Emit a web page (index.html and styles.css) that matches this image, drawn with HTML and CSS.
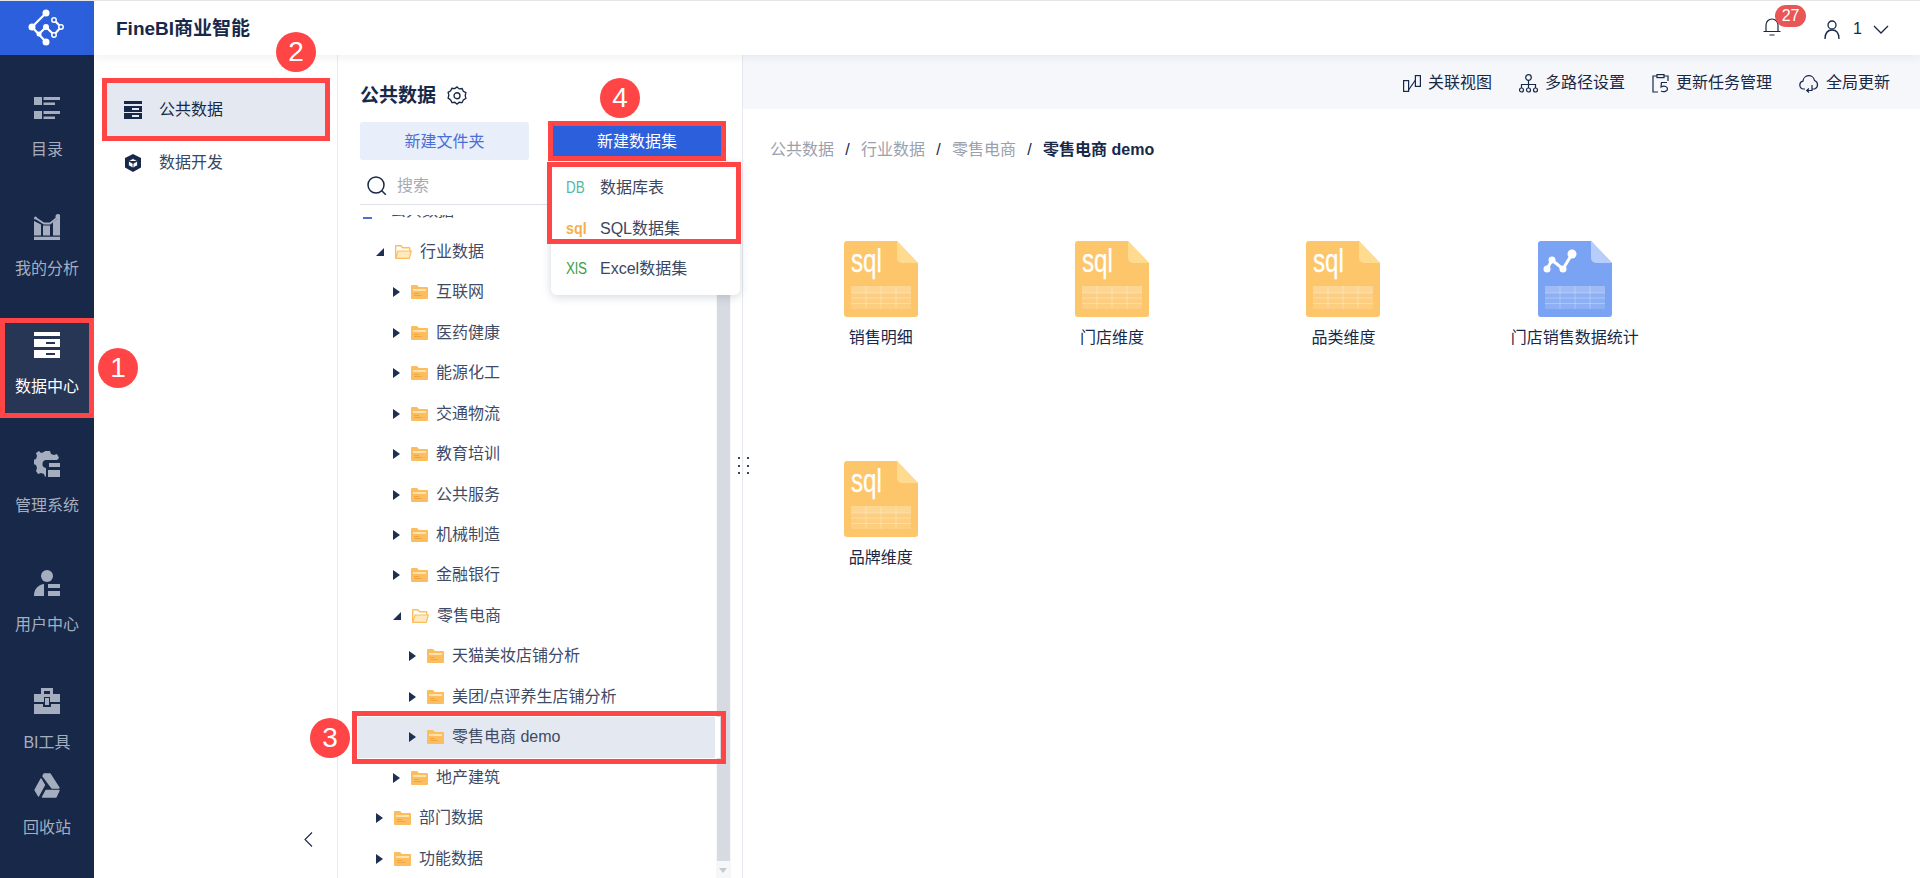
FILE: index.html
```html
<!DOCTYPE html>
<html lang="zh-CN">
<head>
<meta charset="utf-8">
<title>FineBI商业智能</title>
<link rel="stylesheet" href="styles.css">
</head>
<body>
<svg class="defs" width="0" height="0" aria-hidden="true">
  <defs>
    <symbol id="folder" viewBox="0 0 17 14">
      <path d="M1 0h5l2 2h8a1 1 0 0 1 1 1v10a1 1 0 0 1-1 1H1a1 1 0 0 1-1-1V1a1 1 0 0 1 1-1z" fill="#fbbd5e"/>
      <rect x="2" y="4" width="13" height="2" fill="#ffe3ad"/>
      <rect x="3" y="8" width="5" height="1" fill="#f0a63f"/>
      <rect x="3" y="10" width="8" height="1" fill="#f0a63f"/>
    </symbol>
    <symbol id="folder-open" viewBox="0 0 17 14">
      <path d="M.7 13V1.2q0-.5.5-.5h4.500l2 2h6.600q.5 0 .5.5V6" fill="none" stroke="#fbbd5e" stroke-width="1.400"/>
      <path d="M.7 13.300h13.600l2-7.300H3z" fill="#ffe9bf" stroke="#fbbd5e" stroke-width="1.200"/>
    </symbol>
    <symbol id="table-grid" viewBox="0 0 60 23">
      <rect width="60" height="23" fill="#fff" opacity=".14"/>
      <rect width="60" height="7" fill="#fff" opacity=".16"/>
      <path d="M15 0v23M30 0v23M45 0v23M0 7h60M0 12h60M0 17.500h60" stroke="#fff" stroke-opacity=".28" fill="none"/>
    </symbol>
  </defs>
</svg>

<div class="app">
  <aside class="rail">
    <div class="logo">
      <svg width="94" height="54" viewBox="0 1 94 54" fill="none">
        <path d="M46 13 32 27l14 15M39 34l7-7 8 8 7-8-7-7" stroke="#fff" stroke-width="2.200"/>
        <circle cx="46" cy="13" r="3.500" fill="#fff"/>
        <circle cx="32" cy="27" r="3.500" fill="#fff"/>
        <circle cx="46" cy="42" r="3.500" fill="#fff"/>
        <circle cx="46" cy="27" r="3" fill="#fff"/>
        <circle cx="39" cy="34" r="2.500" fill="#fff"/>
        <circle cx="54" cy="20" r="2.200" fill="#2c5fdb" stroke="#fff" stroke-width="1.500"/>
        <circle cx="61" cy="27" r="2.200" fill="#2c5fdb" stroke="#fff" stroke-width="1.500"/>
        <circle cx="54" cy="35" r="2.200" fill="#2c5fdb" stroke="#fff" stroke-width="1.500"/>
      </svg>
    </div>
    <nav class="rail-nav">
      <a class="rail-item">
        <svg class="rail-icon" viewBox="0 0 26 26"><path d="M0 2h8v8H0zM0 16h8v8H0zM9.500 2H26v3H9.500zM9.500 7.500H21v2.500H9.500zM9.500 16H26v3H9.500zM9.500 21.500H21V24H9.500z"/></svg>
        <span>目录</span>
      </a>
      <a class="rail-item">
        <svg class="rail-icon" viewBox="0 0 26 26"><path d="M0 22.700h26V26H0zM0 7l7 3.500v11H0zM9 11.500h7v10H9zM19 8l7-5v18.500h-7z"/><path d="M1.500 4l8.500 5.500h6L24 3" stroke="currentColor" fill="none" stroke-width="1.800"/><circle cx="24" cy="2.500" r="2.500"/><circle cx="1.500" cy="4" r="1.500"/></svg>
        <span>我的分析</span>
      </a>
      <a class="rail-item is-active">
        <svg class="rail-icon" viewBox="0 0 26 26"><path fill-rule="evenodd" d="M0 0h26v4H0zM0 7h26v8H0zM12 10v2h9v-2zM0 18h26v8H0zM12 21v2h9v-2z"/></svg>
        <span>数据中心</span>
      </a>
      <a class="rail-item">
        <svg class="rail-icon" viewBox="0 0 26 26"><path d="M11 0h5l1 3 3 1 3-1 2 4-2 2H13a4 4 0 0 0-1 8v8l-1 1-1-3-3-1-3 1-2-3 1-3-1-3-3-1v-4l3-1 1-3-1-3 3-2 2 2 3-1z"/><path d="M15 12h11v4H15zM14 19h12v7H14z"/></svg>
        <span>管理系统</span>
      </a>
      <a class="rail-item">
        <svg class="rail-icon" viewBox="0 0 26 26"><circle cx="13" cy="6" r="6"/><path d="M0 26c0-6 3-11 10-12v12zM14 14h12v4H14zM14 21h12v5H14z"/></svg>
        <span>用户中心</span>
      </a>
      <a class="rail-item">
        <svg class="rail-icon" viewBox="0 0 26 26"><path fill-rule="evenodd" d="M7 0h12v6h7v8H16v-5H10v5H0V6h7zM10 3v3h6V3zM11 10h4v7h-4zM0 16h9v3h8v-3h9v10H0z"/></svg>
        <span>BI工具</span>
      </a>
      <a class="rail-item is-tail">
        <svg class="rail-icon icon-round" viewBox="0 0 26 26"><path d="M10 1h6l9 14h-7L9 3zM7 6l3.500 6-6 11L1 17zM8.500 24l3.500-6.500h13L22 24z"/></svg>
        <span>回收站</span>
      </a>
    </nav>
  </aside>

  <div class="main">
    <header class="topbar">
      <h1 class="brand">FineBI商业智能</h1>
      <div class="top-actions">
        <div class="bell">
          <svg width="18" height="19" viewBox="0 0 18 19" fill="none" stroke="#172849" stroke-width="1.200"><path d="M3 14V8a6 6 0 0 1 12 0v6M.5 14.500h17M6.500 18h5"/></svg>
          <span class="bell-count">27</span>
        </div>
        <div class="user">
          <svg width="16" height="19" viewBox="0 0 16 19" fill="none" stroke="#172849" stroke-width="1.300"><circle cx="8" cy="5" r="4"/><path d="M1 19c0-6 3-9 7-9s7 3 7 9"/></svg>
          <span class="user-name">1</span>
          <svg class="user-caret" width="16" height="9" viewBox="0 0 16 9" fill="none" stroke="#172849" stroke-width="1.300"><path d="M1 1l7 7 7-7"/></svg>
        </div>
      </div>
    </header>

    <div class="workspace">
      <section class="side">
        <a class="side-item is-selected">
          <svg class="side-icon" viewBox="0 0 18 18"><path fill-rule="evenodd" d="M0 0h18v3H0zM0 5h18v6H0zM8 7v2h7V7zM0 12h18v6H0zM8 14v2h7v-2z"/></svg>
          <span>公共数据</span>
        </a>
        <a class="side-item">
          <svg class="side-icon" viewBox="0 0 18 18"><path d="M9 0l8 4v9.500L9 18l-8-4.500V4z"/><path d="M9 4.500l4.500 2.500v4.500L9 14l-4.500-2.500V7zM4.500 7L9 9.500 13.500 7M9 9.500V14" fill="#fff" stroke="#172849" stroke-width=".8"/></svg>
          <span>数据开发</span>
        </a>
        <svg class="collapse" width="9" height="15" viewBox="0 0 9 15" fill="none" stroke="#172849" stroke-width="1.100"><path d="M8 .5 1 7.500 8 14.500"/></svg>
      </section>

      <section class="tree-panel">
        <div class="tree-title">
          <h2>公共数据</h2>
          <svg width="20" height="20" viewBox="0 0 18 18" fill="none" stroke="#172849" stroke-width="1.200"><path d="M9 .8l2 1.800 2.600-.3 1.100 2.400 2.300 1.300-.6 2.600.6 2.600-2.300 1.300-1.100 2.400-2.600-.3-2 1.800-2-1.800-2.600.3-1.100-2.400L1 10.900l.6-2.600L1 5.700l2.300-1.300 1.100-2.400 2.600.3z"/><circle cx="9" cy="8.800" r="2.700"/></svg>
        </div>
        <div class="tree-actions">
          <button class="btn btn-soft">新建文件夹</button>
          <button class="btn btn-primary">新建数据集</button>
        </div>
        <div class="search">
          <svg width="20" height="20" viewBox="0 0 20 20" fill="none" stroke="#172849" stroke-width="1.500"><circle cx="9" cy="9" r="8"/><path d="M14.800 14.800l4 4"/></svg>
          <span>搜索</span>
        </div>

        <div class="tree-clip">
          <div class="scrollbar"><div class="scroll-thumb"></div><i class="scroll-arrow"></i></div>
          <ul class="tree">
            <li class="row d0 root"><span class="dash"></span><span class="root-label">公共数据</span></li>
            <li class="row d1"><i class="tri tri-open"></i><svg class="fold"><use href="#folder-open"/></svg><span>行业数据</span></li>
            <li class="row d2"><i class="tri"></i><svg class="fold"><use href="#folder"/></svg><span>互联网</span></li>
            <li class="row d2"><i class="tri"></i><svg class="fold"><use href="#folder"/></svg><span>医药健康</span></li>
            <li class="row d2"><i class="tri"></i><svg class="fold"><use href="#folder"/></svg><span>能源化工</span></li>
            <li class="row d2"><i class="tri"></i><svg class="fold"><use href="#folder"/></svg><span>交通物流</span></li>
            <li class="row d2"><i class="tri"></i><svg class="fold"><use href="#folder"/></svg><span>教育培训</span></li>
            <li class="row d2"><i class="tri"></i><svg class="fold"><use href="#folder"/></svg><span>公共服务</span></li>
            <li class="row d2"><i class="tri"></i><svg class="fold"><use href="#folder"/></svg><span>机械制造</span></li>
            <li class="row d2"><i class="tri"></i><svg class="fold"><use href="#folder"/></svg><span>金融银行</span></li>
            <li class="row d2"><i class="tri tri-open"></i><svg class="fold"><use href="#folder-open"/></svg><span>零售电商</span></li>
            <li class="row d3"><i class="tri"></i><svg class="fold"><use href="#folder"/></svg><span>天猫美妆店铺分析</span></li>
            <li class="row d3"><i class="tri"></i><svg class="fold"><use href="#folder"/></svg><span>美团/点评养生店铺分析</span></li>
            <li class="row d3 is-current"><i class="tri"></i><svg class="fold"><use href="#folder"/></svg><span>零售电商 demo</span></li>
            <li class="row d2"><i class="tri"></i><svg class="fold"><use href="#folder"/></svg><span>地产建筑</span></li>
            <li class="row d1"><i class="tri"></i><svg class="fold"><use href="#folder"/></svg><span>部门数据</span></li>
            <li class="row d1"><i class="tri"></i><svg class="fold"><use href="#folder"/></svg><span>功能数据</span></li>
          </ul>
        </div>

        <div class="menu">
          <div class="menu-row"><span class="mark mark-db">DB</span><span>数据库表</span></div>
          <div class="menu-row"><span class="mark mark-sql">sql</span><span>SQL数据集</span></div>
          <div class="menu-row"><span class="mark mark-xls">XlS</span><span>Excel数据集</span></div>
          <div class="menu-mark"></div>
        </div>
      </section>

      <section class="content">
        <svg class="grip" width="12" height="18" viewBox="0 0 12 18" fill="#3a4762"><rect x="1" y="0" width="2" height="2"/><rect x="1" y="8" width="2" height="2"/><rect x="1" y="15" width="2" height="2"/><rect x="10" y="0" width="2" height="2"/><rect x="10" y="8" width="2" height="2"/><rect x="10" y="15" width="2" height="2"/></svg>
        <div class="toolbar">
          <a class="tool">
            <svg width="18" height="17" viewBox="0 0 18 17" fill="none" stroke="#172849" stroke-width="1.200"><rect x=".6" y="5.600" width="5" height="10.800"/><rect x="12.400" y=".6" width="5" height="10.800"/><path d="M5.500 15l7-10"/></svg>
            <span>关联视图</span>
          </a>
          <a class="tool">
            <svg width="19" height="19" viewBox="0 0 19 19" fill="none" stroke="#172849" stroke-width="1.200"><circle cx="9.500" cy="3.500" r="2.800"/><circle cx="2.500" cy="16" r="2"/><circle cx="9.500" cy="16" r="2"/><circle cx="16.500" cy="16" r="2"/><path d="M9.500 6.500V14M2.500 14v-3.500h14V14"/></svg>
            <span>多路径设置</span>
          </a>
          <a class="tool">
            <svg width="17" height="19" viewBox="0 0 17 19" fill="none" stroke="#172849" stroke-width="1.200"><path d="M5 2H1v16h5M12 2h4v5"/><rect x="5" y=".6" width="7" height="3"/><path d="M15 8.500H9.500L9 13c4-2 6.500 0 6.500 2s-3.500 3.500-6.500 2"/></svg>
            <span>更新任务管理</span>
          </a>
          <a class="tool">
            <svg width="20" height="19" viewBox="0 0 20 19" fill="none" stroke="#172849" stroke-width="1.200"><path d="M6 15H4.500A4 4 0 0 1 4 7.100 5.800 5.800 0 0 1 15.500 6.500 4.500 4.500 0 0 1 15.500 15H13"/><path d="M13 11v5.500H7.500M10 14.500l-2.300 2 2.300 2"/></svg>
            <span>全局更新</span>
          </a>
        </div>

        <div class="pane">
          <div class="crumbs">
            <span>公共数据</span><i>/</i><span>行业数据</span><i>/</i><span>零售电商</span><i>/</i><strong>零售电商 demo</strong>
          </div>
          <div class="files">
            <figure class="file">
              <svg class="file-icon" viewBox="0 0 74 76"><path class="sheet-sql" d="M3 0h50l21 22v51a3 3 0 0 1-3 3H3a3 3 0 0 1-3-3V3a3 3 0 0 1 3-3z"/><path class="fold-sql" d="M53 0l21 22H58a5 5 0 0 1-5-5z"/><text class="sql-mark" x="7" y="31" textLength="31" lengthAdjust="spacingAndGlyphs">sql</text><use href="#table-grid" x="7" y="45" width="60" height="23"/></svg>
              <figcaption>销售明细</figcaption>
            </figure>
            <figure class="file">
              <svg class="file-icon" viewBox="0 0 74 76"><path class="sheet-sql" d="M3 0h50l21 22v51a3 3 0 0 1-3 3H3a3 3 0 0 1-3-3V3a3 3 0 0 1 3-3z"/><path class="fold-sql" d="M53 0l21 22H58a5 5 0 0 1-5-5z"/><text class="sql-mark" x="7" y="31" textLength="31" lengthAdjust="spacingAndGlyphs">sql</text><use href="#table-grid" x="7" y="45" width="60" height="23"/></svg>
              <figcaption>门店维度</figcaption>
            </figure>
            <figure class="file">
              <svg class="file-icon" viewBox="0 0 74 76"><path class="sheet-sql" d="M3 0h50l21 22v51a3 3 0 0 1-3 3H3a3 3 0 0 1-3-3V3a3 3 0 0 1 3-3z"/><path class="fold-sql" d="M53 0l21 22H58a5 5 0 0 1-5-5z"/><text class="sql-mark" x="7" y="31" textLength="31" lengthAdjust="spacingAndGlyphs">sql</text><use href="#table-grid" x="7" y="45" width="60" height="23"/></svg>
              <figcaption>品类维度</figcaption>
            </figure>
            <figure class="file">
              <svg class="file-icon" viewBox="0 0 74 76"><path class="sheet-chart" d="M3 0h50l21 22v51a3 3 0 0 1-3 3H3a3 3 0 0 1-3-3V3a3 3 0 0 1 3-3z"/><path class="fold-chart" d="M53 0l21 22H58a5 5 0 0 1-5-5z"/><path d="M9 28l5-9 11 9 9-15" fill="none" stroke="#fff" stroke-width="3"/><circle cx="9" cy="28" r="3.500" fill="#fff"/><circle cx="14" cy="19" r="3.500" fill="#fff"/><circle cx="25" cy="28" r="3.500" fill="#fff"/><circle cx="34" cy="13" r="4.500" fill="#fff"/><use href="#table-grid" x="7" y="45" width="60" height="23"/></svg>
              <figcaption>门店销售数据统计</figcaption>
            </figure>
            <figure class="file">
              <svg class="file-icon" viewBox="0 0 74 76"><path class="sheet-sql" d="M3 0h50l21 22v51a3 3 0 0 1-3 3H3a3 3 0 0 1-3-3V3a3 3 0 0 1 3-3z"/><path class="fold-sql" d="M53 0l21 22H58a5 5 0 0 1-5-5z"/><text class="sql-mark" x="7" y="31" textLength="31" lengthAdjust="spacingAndGlyphs">sql</text><use href="#table-grid" x="7" y="45" width="60" height="23"/></svg>
              <figcaption>品牌维度</figcaption>
            </figure>
          </div>
        </div>
      </section>
    </div>
  </div>

  <b class="step step-1">1</b>
  <b class="step step-2">2</b>
  <b class="step step-3">3</b>
  <b class="step step-4">4</b>
</div>
</body>
</html>
```

FILE: styles.css
```css
* { box-sizing: border-box; }
html, body { margin: 0; height: 100%; }
body {
  font-family: "Liberation Sans", "Noto Sans CJK SC", sans-serif;
  font-size: 16px;
  line-height: 22px;
  color: #172849;
  background: #fff;
  overflow: hidden;
}
.defs { position: absolute; }
.app {
  position: relative;
  display: flex;
  width: 1920px;
  height: 878px;
  border-top: 1px solid #e6e6e6;
  overflow: hidden;
}

/* left rail */
.rail { flex: 0 0 94px; display: flex; flex-direction: column; background: #172849; color: #a5aebf; }
.logo { height: 54px; flex: none; background: #2c5fdb; }
.logo svg { display: block; }
.rail-nav { display: flex; flex-direction: column; align-items: center; gap: 28.7px; padding-top: 31px; }
.rail-item { width: 84px; height: 90px; padding-top: 9px; display: flex; flex-direction: column; align-items: center; gap: 18px; }
.rail-icon { width: 26px; height: 26px; fill: currentColor; display: block; }
.icon-round { stroke: currentColor; stroke-width: 1.4; stroke-linejoin: round; }
.rail-item.is-active { background: #283655; color: #fff; outline: 5px solid #ff4545; }
.rail-item.is-tail { margin-top: -34px; }

/* main */
.main { flex: 1; display: flex; flex-direction: column; min-width: 0; }
.topbar {
  position: relative;
  z-index: 3;
  height: 54px;
  flex: none;
  display: flex;
  align-items: center;
  justify-content: space-between;
  padding: 2px 31px 0 22px;
  background: #fff;
  box-shadow: 0 2px 10px rgba(23, 40, 73, .07);
}
.brand { margin: 0; font-size: 19px; font-weight: 700; line-height: 22px; color: #172849; }
.top-actions { display: flex; align-items: center; gap: 43px; }
.bell { position: relative; height: 19px; margin-top: -5px; }
.bell svg { display: block; }
.bell-count {
  position: absolute;
  left: 12px;
  top: -12px;
  width: 31px;
  height: 22px;
  border-radius: 11px;
  background: #e85655;
  color: #fff;
  font-size: 16px;
  line-height: 21px;
  text-align: center;
}
.user { display: flex; align-items: center; gap: 13px; }
.user-caret { margin-left: -2px; }

.workspace { flex: 1; display: flex; min-height: 0; }

/* side list */
.side { flex: 0 0 244px; display: flex; flex-direction: column; padding: 28px 0 31px 13px; border-right: 1px solid #eaecf0; }
.side-item { width: 218px; height: 53px; flex: none; padding-left: 17px; display: flex; align-items: center; gap: 17px; color: #3a4762; }
.side-icon { width: 18px; height: 18px; fill: #172849; flex: none; }
.side-item.is-selected { background: #e4e8f0; outline: 5px solid #ff4545; color: #172849; }
.collapse { margin: auto 24px 0 auto; }

/* tree panel */
.tree-panel { position: relative; flex: 0 0 404px; display: flex; flex-direction: column; padding-top: 30px; }
.tree-title { display: flex; align-items: center; gap: 11px; padding-left: 22px; height: 22px; }
.tree-title h2 { margin: 0; font-size: 19px; font-weight: 700; line-height: 22px; }
.tree-actions { display: flex; gap: 24px; align-items: center; padding-left: 22px; margin-top: 15px; height: 38px; }
.btn { font: inherit; font-size: 16px; border: 0; padding: 2px 0 0; text-align: center; }
.btn-soft { width: 169px; height: 38px; background: #e8eefa; color: #4a6fd6; border-radius: 3px; }
.btn-primary { width: 168px; height: 30px; background: #2c5fdb; color: #fff; outline: 5px solid #ff4545; position: relative; z-index: 2; }
.search { display: flex; align-items: center; gap: 10px; margin: 0 21px 0 22px; height: 45px; padding: 8px 0 0 7px; border-bottom: 1px solid #dfe2e8; color: #a5aab5; }
.tree-clip { position: relative; flex: 1; margin-top: 10px; overflow: hidden; }
.tree { list-style: none; margin: -24px 0 0; padding: 0; }
.row { position: relative; z-index: 1; height: 40.47px; display: flex; align-items: center; color: #3f4b66; }
.row > svg.fold { width: 17px; height: 14px; margin-right: 8px; flex: none; }
.d0 { padding-left: 25px; }
.d1 { padding-left: 38px; }
.d2 { padding-left: 55px; }
.d3 { padding-left: 71px; }
.dash { width: 9px; height: 2px; background: #4a6fd6; margin: 13px 18px 0 0; }
.root-label { color: #3f4b66; }
.tri { width: 0; height: 0; border-style: solid; border-width: 5px 0 5px 7px; border-color: transparent transparent transparent #1e2f52; margin-right: 11px; flex: none; }
.tri-open { width: 0; height: 0; border-width: 0 0 8px 8px; border-color: transparent transparent #1e2f52 transparent; margin-right: 11px; }
.is-current { margin-left: 20px; padding-left: 51px; width: 362px; background: #e4e8f0; border-right: 5px solid #fff; outline: 5px solid #ff4545; outline-offset: 1px; }
.scrollbar { position: absolute; left: 378px; top: 0; bottom: 0; width: 15px; background: #f6f7f8; padding: 0 1px; }
.scroll-thumb { height: 646px; background: #d7dbe1; }
.scroll-arrow { position: absolute; left: 3px; bottom: 5px; border-style: solid; border-width: 5px 4.500px 0; border-color: #c5c9d0 transparent transparent; }

.menu { position: absolute; z-index: 4; left: 213px; top: 107px; width: 189px; height: 133px; padding-top: 6px; background: #fff; border-radius: 6px; box-shadow: 0 2px 10px rgba(23, 40, 73, .18); color: #3a4762; }
.menu-row { height: 40.500px; display: flex; align-items: center; padding-left: 15px; }
.mark { width: 34px; font-size: 16px; flex: none; display: inline-block; transform: scaleX(.84); transform-origin: left center; }
.mark-db { color: #4fb8a8; }
.mark-sql { color: #f4b04f; font-size: 17px; font-weight: 700; }
.mark-xls { color: #3f9e4a; }
.menu-mark { position: absolute; left: 1px; top: 5px; width: 184px; height: 72px; outline: 5px solid #ff4545; }

/* content */
.content { position: relative; flex: 1; display: flex; flex-direction: column; border-left: 1px solid #e6e9ef; min-width: 0; }
.grip { position: absolute; left: -6px; top: 402px; z-index: 5; }
.toolbar { flex: none; height: 54px; display: flex; align-items: center; justify-content: flex-end; gap: 27px; padding: 2px 30px 0 0; background: #f5f7fb; }
.tool { display: flex; align-items: center; gap: 7px; }
.pane { flex: 1; padding: 30px 0 0 27px; }
.crumbs { display: flex; align-items: center; gap: 10px; height: 22px; color: #9aa1ae; }
.crumbs i { width: 7px; font-style: normal; color: #172849; text-align: center; }
.crumbs strong { color: #172849; font-weight: 700; }
.files { display: grid; grid-template-columns: repeat(4, 231.4px); grid-auto-rows: 220px; margin: 80px 0 0 -5px; }
.file { margin: 0; display: flex; flex-direction: column; align-items: center; gap: 10px; }
.file-icon { width: 74px; height: 76px; display: block; }
.sheet-sql { fill: #fdc66b; }
.fold-sql { fill: #ffdb8f; }
.sheet-chart { fill: #7ba3f3; }
.fold-chart { fill: #b7cdfb; }
.sql-mark { fill: #fff; stroke: #fff; stroke-width: .25; font-family: "Liberation Sans", sans-serif; font-size: 34px; }
.file figcaption { color: #172849; line-height: 22px; white-space: nowrap; }

/* numbered callouts */
.step { position: absolute; z-index: 6; width: 40px; height: 40px; border-radius: 50%; background: #ff4545; color: #fff; font-size: 28px; font-weight: 400; line-height: 40px; text-align: center; }
.step-1 { left: 98px; top: 347px; }
.step-2 { left: 276px; top: 31px; }
.step-3 { left: 310px; top: 717px; }
.step-4 { left: 600px; top: 77px; }
```
